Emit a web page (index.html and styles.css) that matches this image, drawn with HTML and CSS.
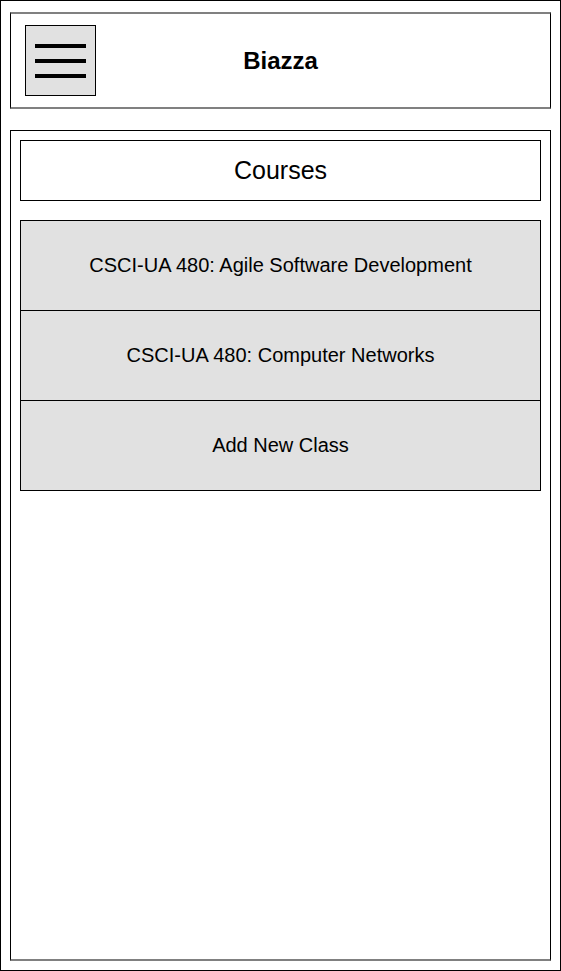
FILE: index.html
```html
<!DOCTYPE html>
<html lang="en">
<head>
  <meta charset="UTF-8" />
  <meta name="viewport" content="width=device-width, initial-scale=1.0" />
  <title>Biazza - Courses</title>
  <link rel="stylesheet" href="styles.css">
</head>
<body>

<div class="frame">
  <header class="topbar">
    <button type="button" class="menu-btn" aria-label="Menu">
      <span></span>
      <span></span>
      <span></span>
    </button>
    <h1 class="brand">Biazza</h1>
    <div class="spacer"></div>
  </header>

  <main class="panel">
    <div class="panel-title">Courses</div>
    <ul class="course-list">
      <li class="course">CSCI-UA 480: Agile Software Development</li>
      <li class="course">CSCI-UA 480: Computer Networks</li>
      <li class="course">Add New Class</li>
    </ul>
  </main>
</div>

</body>
</html>
```

FILE: styles.css
```css
html, body {
  margin: 0;
  padding: 0;
  height: 100%;
  font-family: "Liberation Sans", Arial, sans-serif;
  color: #000;
  background: #fff;
}
.frame {
  box-sizing: border-box;
  height: 971px;
  border: 1px solid #000;
  padding: 11px 9px 9px 9px;
  display: flex;
  flex-direction: column;
}
.topbar {
  height: 97px;
  box-sizing: border-box;
  border-left: 1px solid #000;
  border-right: 1px solid #000;
  border-top: 2px solid #808080;
  border-bottom: 2px solid #808080;
  padding: 11px 14px;
  display: grid;
  grid-template-columns: 1fr auto 1fr;
  align-items: center;
}
.menu-btn {
  box-sizing: border-box;
  width: 71px;
  height: 71px;
  padding: 0;
  margin: 0;
  border: 1px solid #000;
  background: #e1e1e1;
  display: flex;
  flex-direction: column;
  align-items: center;
  justify-content: center;
  gap: 11px;
}
.menu-btn span {
  display: block;
  width: 51px;
  height: 4px;
  background: #000;
}
.brand {
  margin: 0;
  font-size: 24px;
  font-weight: bold;
  text-align: center;
}
.panel {
  flex: 1;
  margin-top: 21px;
  box-sizing: border-box;
  border-left: 1px solid #000;
  border-right: 1px solid #000;
  border-top: 1px solid #000;
  border-bottom: 2px solid #808080;
  padding: 9px 9px;
}
.panel-title {
  height: 61px;
  box-sizing: border-box;
  border: 1px solid #000;
  display: flex;
  align-items: center;
  justify-content: center;
  font-size: 25px;
}
.course-list {
  list-style: none;
  margin: 19px 0 0 0;
  padding: 0;
  border: 1px solid #000;
}
.course {
  height: 89px;
  display: flex;
  align-items: center;
  justify-content: center;
  background: #e1e1e1;
  font-size: 20px;
}
.course + .course {
  border-top: 1px solid #000;
}
```
